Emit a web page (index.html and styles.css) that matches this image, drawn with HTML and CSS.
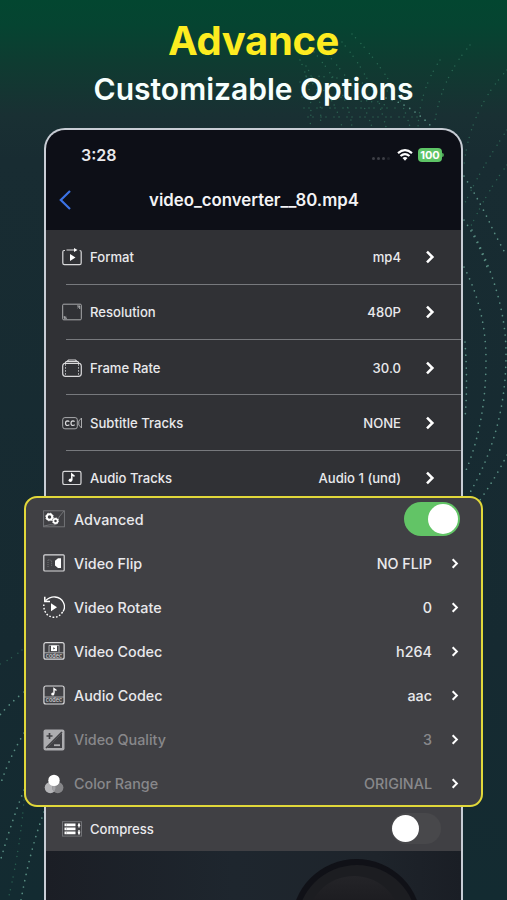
FILE: index.html
```html
<!DOCTYPE html>
<html lang="en">
<head>
<meta charset="utf-8">
<title>Advance Customizable Options</title>
<link rel="stylesheet" href="styles.css">
</head>
<body>
<svg class="backdrop" viewBox="0 0 507 900" aria-hidden="true">
  <g class="dots faint">
    <path d="M300 60Q314 90 310 127M306 66Q324 95 320 127M300 82Q330 80 342 127M314 52Q348 92 352 127M328 55Q360 90 372 127M342 42Q374 80 386 127M352 34Q398 82 410 127M304 108H400M308 117H420M302 97Q345 94 385 105M306 76Q350 76 390 92"/>
    <path d="M507 70Q470 110 464 165M507 130Q480 170 464 205M440 60Q420 90 418 127M470 45Q440 80 434 127M507 165Q488 190 470 228"/>
    <path d="M24 800Q20 850 8 900M22 650Q10 660 0 664"/>
  </g>
  <g class="dots">
    <path d="M386 98Q410 104 432 127"/>
    <path d="M464 176Q482 205 493 230Q502 248 507 256M464 220Q478 240 488 270"/>
    <path d="M472 230Q505 295 506 350Q507 430 468 496"/>
    <path d="M464 267Q486 310 486 360Q486 425 464 475"/>
    <path d="M465 342Q468 385 465 418M507 455Q496 477 480 500"/>
    <path d="M24 692Q8 705 0 715M24 733Q8 760 0 786M24 790Q12 820 0 862M44 812Q30 850 21 900"/>
  </g>
</svg>

<svg class="defs" aria-hidden="true">
  <symbol id="chevron" viewBox="0 0 10 14"><path d="M2 1.6 7.4 7 2 12.4" fill="none" stroke="#fff" stroke-width="2.5"/></symbol>
</svg>

<header class="hero">
  <h1>Advance</h1>
  <p>Customizable Options</p>
</header>

<main class="phone">
  <div class="status">
    <span class="time">3:28</span>
    <span class="signal"><i></i><i></i><i></i><i></i></span>
    <svg class="wifi" viewBox="0 0 16 12"><path d="M1 4.2Q8-1.8 15 4.2M3.500 7Q8 3.200 12.500 7" fill="none" stroke="#fff" stroke-width="2.2"/><path d="M5.500 9Q8 7 10.500 9L8 11.700Z" fill="#fff"/></svg>
    <span class="battery">100</span><span class="cap"></span>
  </div>
  <div class="nav">
    <svg class="back" viewBox="0 0 12 20"><path d="M11 1 1.800 10 11 19" fill="none" stroke="#3c73e6" stroke-width="2.2"/></svg>
    <span class="title">video_converter__80.mp4</span>
  </div>

  <section class="list">
    <div class="row">
      <svg class="icon" viewBox="0 0 20 18"><path d="M3 2.5H2Q.8 2.5.8 4V15Q.8 16.6 2.4 16.6H17.6Q19.2 16.6 19.2 15V4Q19.2 2.5 17.6 2.5M4.5 2H13" class="line"/><path d="M12 0 15.5 2 12 4ZM8 6V13L13.5 9.5Z" fill="#fff"/></svg>
      <span class="label">Format</span><span class="value">mp4</span><svg class="chev"><use href="#chevron"/></svg>
    </div>
    <div class="row">
      <svg class="icon" viewBox="0 0 20 18"><rect x=".7" y="1.2" width="18.6" height="15.6" rx="1" class="line thin"/><path d="M15 3H17.700V6M17.700 3 15.500 5M2.300 13V15.200H5M2.300 15.200 4.200 13.500" class="line thin"/></svg>
      <span class="label">Resolution</span><span class="value">480P</span><svg class="chev"><use href="#chevron"/></svg>
    </div>
    <div class="row">
      <svg class="icon" viewBox="0 0 20 18"><path d="M2 4.5H18Q19.3 5.5 19.3 7V14.5Q19.3 17.3 16.5 17.3H3.5Q.7 17.3.7 14.5V7Q.7 5.5 2 4.5ZM3 4.2 4.2 2.6H15.8L17 4.2M5 2.4 6.5 1H13.5L15 2.4" class="line"/><path d="M3.5 5V17M16.5 5V17" class="line thin" stroke-dasharray="1.8 1.2"/></svg>
      <span class="label">Frame Rate</span><span class="value">30.0</span><svg class="chev"><use href="#chevron"/></svg>
    </div>
    <div class="row">
      <svg class="icon" viewBox="0 0 20 18"><rect x=".7" y="3.6" width="14.6" height="11.2" rx="2.2" class="line thin"/><path d="M7.3 7.7Q6.7 6.9 5.5 6.9 3.5 7 3.5 9.2T5.5 11.5Q6.7 11.5 7.3 10.7M12.6 7.7Q12 6.9 10.9 6.9 9 7 9 9.2T10.9 11.5Q12 11.5 12.6 10.7" class="line"/><path d="M19.5 4V14L16.8 11V7Z" class="line thin"/></svg>
      <span class="label">Subtitle Tracks</span><span class="value">NONE</span><svg class="chev"><use href="#chevron"/></svg>
    </div>
    <div class="row">
      <svg class="icon" viewBox="0 0 20 18"><rect x=".8" y="2.3" width="18.2" height="13.2" rx="1.6" class="line"/><path d="M9.8 11V5.2L12.5 7.4" fill="none" stroke="#fff" stroke-width="1.5"/><circle cx="8.4" cy="11.3" r="1.8" fill="#fff"/></svg>
      <span class="label">Audio Tracks</span><span class="value">Audio 1 (und)</span><svg class="chev"><use href="#chevron"/></svg>
    </div>
  </section>

  <section class="panel">
    <div class="option">
      <svg class="icon" viewBox="0 0 22 22"><rect x=".6" y="2.8" width="20.8" height="16" class="line dim"/><path d="M1 18Q8 16 11 17T16 9L21 3" class="line dim"/><circle cx="6.5" cy="9" r="2.7" fill="none" stroke="#fff" stroke-width="1.9"/><circle cx="6.5" cy="9" r="3.8" fill="none" stroke="#fff" stroke-width="1" stroke-dasharray="1.5 1.5"/><circle cx="12.5" cy="13" r="2.1" fill="none" stroke="#fff" stroke-width="1.7"/><circle cx="12.5" cy="13" r="3.1" fill="none" stroke="#fff" stroke-width=".8" stroke-dasharray="1.2 1.2"/></svg>
      <span class="label">Advanced</span><span class="switch on"><b></b></span>
    </div>
    <div class="option">
      <svg class="icon" viewBox="0 0 22 22"><rect x=".8" y="2.8" width="20.4" height="16.2" rx="1" class="line"/><path d="M5 15V7.5L8.6 8.5V14" class="line dim" stroke-dasharray="1 1"/><path d="M18 6.3V16H15L12 13.5V8.8L15 6.3Z" fill="#fff"/></svg>
      <span class="label">Video Flip</span><span class="value">NO FLIP</span><svg class="chev"><use href="#chevron"/></svg>
    </div>
    <div class="option">
      <svg class="icon" viewBox="0 0 22 22"><path d="M2.5 4.7Q7 .6 12 1 18 1.5 20.4 6.5T20 15.5" fill="none" stroke="#fff" stroke-width="1.3"/><path d="M1.8.8V5.6H7" fill="none" stroke="#fff" stroke-width="1.5"/><path d="M19.6 16Q16 21.5 10.5 21.3 1.6 20 .8 10.5V8" fill="none" stroke="#fff" stroke-width="1.4" stroke-dasharray="1.7 1.7"/><path d="M8 7.3V15.2L14 11.2Z" fill="#fff"/></svg>
      <span class="label">Video Rotate</span><span class="value">0</span><svg class="chev"><use href="#chevron"/></svg>
    </div>
    <div class="option">
      <svg class="icon" viewBox="0 0 22 22"><rect x=".9" y="2.6" width="20.2" height="16.6" rx="2" class="line"/><path d="M1 12.8H21M6 12V5.4H16V12" class="line thin"/><rect x="8" y="5.5" width="6" height="5.6" fill="#fff"/><path d="M10.3 7.2V9.6L12.2 8.4Z" fill="#414145"/><text x="11" y="18" class="tiny">codec</text></svg>
      <span class="label">Video Codec</span><span class="value">h264</span><svg class="chev"><use href="#chevron"/></svg>
    </div>
    <div class="option">
      <svg class="icon" viewBox="0 0 22 22"><rect x=".9" y="2" width="20.2" height="18" rx="2" class="line"/><path d="M1 13H21" class="line thin"/><path d="M11 9.6V4.6L13.5 6.5" fill="none" stroke="#fff" stroke-width="1.4"/><circle cx="9.8" cy="10" r="1.6" fill="#fff"/><text x="11" y="18.3" class="tiny">codec</text></svg>
      <span class="label">Audio Codec</span><span class="value">aac</span><svg class="chev"><use href="#chevron"/></svg>
    </div>
    <div class="option muted">
      <svg class="icon" viewBox="0 0 22 22"><rect x=".5" y=".5" width="21" height="21" rx="2" fill="#acacaf"/><path d="M4 19 19 4V19Z" fill="#404044"/><path d="M3 19 19 3M3.500 7H9.500M6.500 4V10" stroke="#404044" stroke-width="1.7"/><path d="M11 16.2H17" stroke="#acacaf" stroke-width="1.8"/></svg>
      <span class="label">Video Quality</span><span class="value">3</span><svg class="chev"><use href="#chevron"/></svg>
    </div>
    <div class="option muted">
      <svg class="icon" viewBox="0 0 22 22"><circle cx="7.3" cy="14.6" r="5.6" fill="#b5b5b8"/><circle cx="14.8" cy="14.6" r="5.6" fill="#858588"/><path d="M11 10.5Q14 14.5 11 18.7 8 14.5 11 10.5" fill="#a2a2a5"/><circle cx="11" cy="7.4" r="5.7" fill="#fff"/></svg>
      <span class="label">Color Range</span><span class="value">ORIGINAL</span><svg class="chev"><use href="#chevron"/></svg>
    </div>
  </section>

  <div class="row compress">
    <svg class="icon" viewBox="0 0 20 18"><rect x=".5" y="1.7" width="19" height="14.4" class="line dim"/><path d="M2.5 4.9H13.500M2.5 8.9H13.500M2.5 12.900H13.500" stroke="#fff" stroke-width="2.8"/><path d="M4 4.9H5M4 8.9H5M4 12.900H5" stroke="#77777b" stroke-width=".7"/><path d="M17 3.500V7.500M17 10V14.500" stroke="#fff" stroke-width="1.3"/><path d="M15.500 6 17 3 18.500 6ZM15.500 11.800 17 14.800 18.500 11.800Z" fill="#fff"/></svg>
    <span class="label">Compress</span><span class="switch off"><b></b></span>
  </div>
  <div class="preview">
    <svg viewBox="0 0 415 49"><defs><linearGradient id="lid" x1="0" y1="0" x2="0" y2="1"><stop stop-color="#242428"/><stop offset=".4" stop-color="#19191d"/></linearGradient></defs><circle cx="310.500" cy="73" r="65" fill="#101117"/><circle cx="311" cy="74" r="60" fill="#1c1d21"/><circle cx="308" cy="72" r="47" fill="url(#lid)"/></svg>
  </div>
</main>
</body>
</html>
```

FILE: styles.css
```css
* { box-sizing: border-box; }

body {
  margin: 0;
  height: 900px;
  overflow: hidden;
  position: relative;
  display: flex;
  flex-direction: column;
  font-family: Inter, "Liberation Sans", sans-serif;
  color: #e9e9ec;
  background: linear-gradient(#034630 0, #054431 25px, #0f3b31 65px, #193033 115px, #182c32 160px, #162a31 650px, #132b31 900px);
}

.backdrop { position: absolute; inset: 0; width: 507px; height: 900px; }
.defs { position: absolute; width: 0; height: 0; }
.dots path { fill: none; stroke: #639d8f; stroke-width: 1.7; stroke-linecap: round; stroke-dasharray: 0 6.5; opacity: .85; }
.dots.faint path { stroke: #398368; stroke-width: 1.5; stroke-dasharray: 0 5 0 8; opacity: .6; }

.hero { position: relative; flex: none; height: 128px; text-align: center; padding-top: 17px; }
.hero h1 { margin: 0; font-size: 40px; line-height: 48px; font-weight: 700; color: #fdec20; letter-spacing: -.35px; }
.hero p { margin: 5px 0 0; font-size: 30px; line-height: 38px; font-weight: 600; color: #f7fffd; }

.phone {
  position: relative;
  width: 419px;
  height: 772px;
  margin-left: 44px;
  border: 2px solid #c8cdd5;
  border-bottom: 0;
  border-radius: 21px 21px 0 0;
  background: #0d0f17;
  flex: none;
}

.status { display: flex; align-items: center; height: 49px; padding: 0 17px 0 35px; }
.time { font-size: 16px; font-weight: 600; flex: 1; }
.signal { display: flex; gap: 2px; margin: 8px 7px 0 0; }
.signal i { width: 3px; height: 3px; border-radius: 50%; background: #3d3f46; }
.signal i:last-child { opacity: .4; }
.wifi { width: 16px; height: 12px; margin-right: 5px; }
.battery { width: 24px; height: 14px; border-radius: 4px; background: #5dc466; color: #fff; font-size: 11px; line-height: 14px; font-weight: 700; text-align: center; }
.cap { width: 2px; height: 4px; background: #4b9d53; border-radius: 0 2px 2px 0; }

.nav { height: 51px; display: flex; align-items: center; padding-left: 13px; padding-bottom: 9px; }
.back { width: 12px; height: 20px; }
.title { flex: 1; margin-right: 24px; text-align: center; font-size: 16.800px; font-weight: 600; color: #f3f3f5; }

.list { height: 266px; overflow: hidden; background: #303135; }
.row { height: 55.250px; display: flex; align-items: center; padding: 0 26px 1px 16px; font-size: 13.100px; font-weight: 550; }
.list .row { background: linear-gradient(#77797d, #77797d) 20px 100% / 100% 1.300px no-repeat; }
.icon { width: 20px; height: 18px; flex: none; }
.row .label { margin-left: 8px; }
.value { margin-left: auto; }
.row .chev { width: 10px; height: 14px; margin-left: 24px; }

.line { fill: none; stroke: #d9d9db; stroke-width: 1.2; }
.thin { stroke: #b7b8ba; stroke-width: .9; }
.dim { stroke: #77787c; stroke-width: .9; }
.tiny { font: 600 5.500px Inter, sans-serif; fill: #c7c7ca; text-anchor: middle; }

.panel {
  position: relative;
  height: 311px;
  margin: 0 -22px;
  padding: 0 22px 0 17px;
  border: 2px solid #e1d83a;
  border-radius: 13px;
  background: #404044;
}
.option { height: 44.100px; display: flex; align-items: center; padding-bottom: 2px; font-size: 14.350px; font-weight: 550; }
.option .icon { width: 22px; height: 22px; }
.option .label { margin-left: 9px; }
.option .chev { width: 8px; height: 11px; margin-left: 19px; }
.muted { color: #88888b; }

.switch { margin-left: auto; display: flex; flex: none; border-radius: 20px; }
.switch b { border-radius: 50%; background: #fff; }
.switch.on { width: 56px; height: 34px; padding: 2px; margin-right: -1px; justify-content: flex-end; background: #62c466; }
.switch.on b { width: 30px; height: 30px; }
.switch.off { width: 50px; height: 31px; padding: 2px 1px; background: #48484b; }
.switch.off b { width: 27px; height: 27px; }

.compress { height: 44px; background: #404044; padding-right: 20px; }
.preview { height: 49px; background: linear-gradient(90deg, #1b1e25, #1e262e 45%, #1e242b 80%, #1a1e25); }
.preview svg { width: 415px; height: 49px; display: block; }
```
